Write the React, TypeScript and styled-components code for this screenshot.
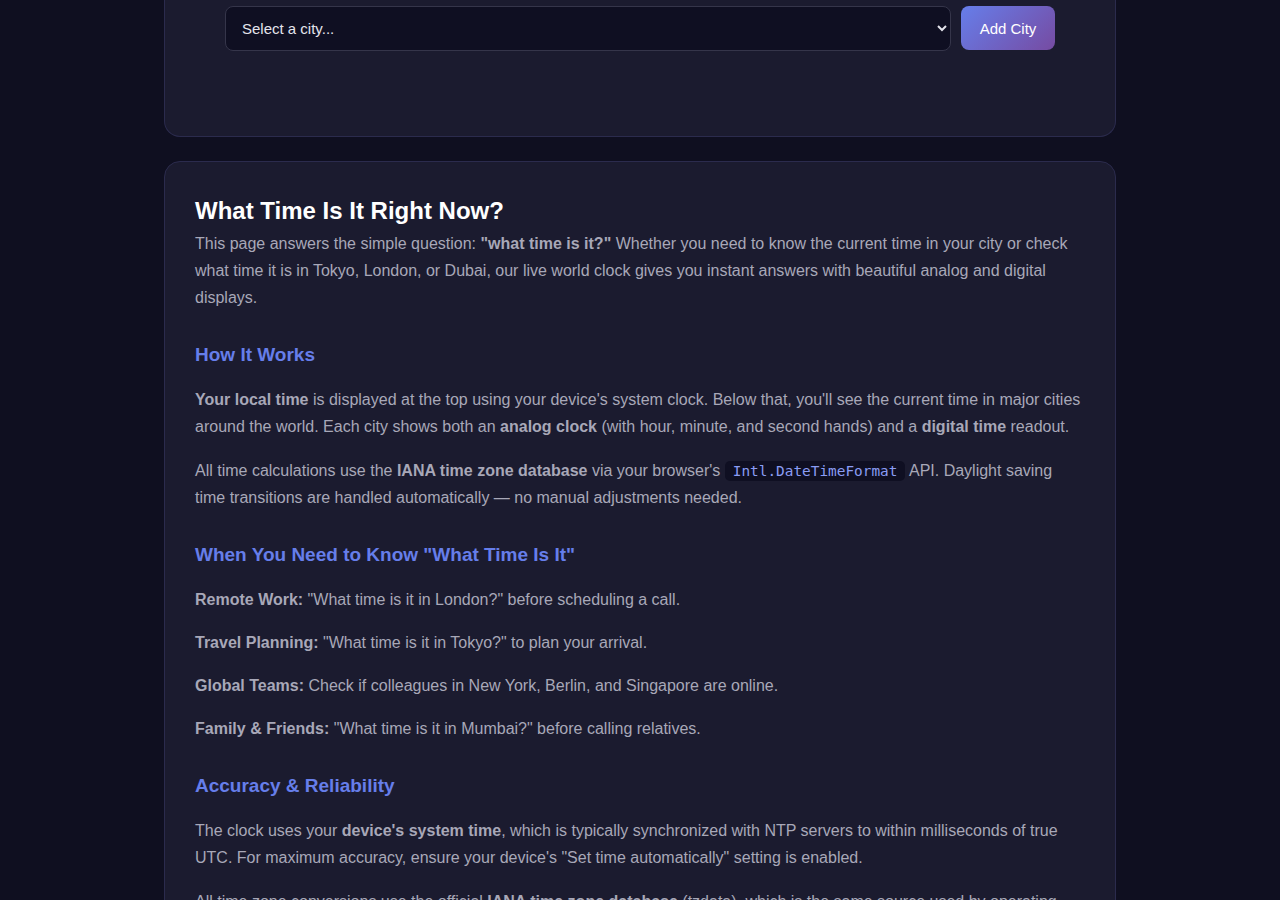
import styled, { createGlobalStyle } from 'styled-components';

const GlobalStyle = createGlobalStyle`
  * {
    box-sizing: border-box;
  }

  body {
    margin: 0;
    background: #0f0f20;
    font-family: "Liberation Sans", Arial, sans-serif;
    color: #a8a8b8;
  }
`;

const Page = styled.main`
  width: 952px;
  margin: 0 auto;
  padding-bottom: 40px;
`;

const Card = styled.section<{ $clipped?: boolean }>`
  background: #1b1b2f;
  border: 1px solid #2b2b4d;
  border-radius: ${(p) => (p.$clipped ? '0 0 16px 16px' : '16px')};
  border-top: ${(p) => (p.$clipped ? 'none' : '1px solid #2b2b4d')};
  padding: ${(p) => (p.$clipped ? '6px 30px 85px' : '30px')};
  margin-bottom: 24px;
`;

const AddRow = styled.div`
  display: flex;
  gap: 10px;
  width: 830px;
  margin: 0 auto;
`;

const CitySelect = styled.select`
  flex: 1;
  height: 45px;
  padding: 0 12px;
  background: #0f0f22;
  color: #e4e4ec;
  border: 1px solid #35354a;
  border-radius: 8px;
  font-family: "Liberation Sans", Arial, sans-serif;
  font-size: 15px;
`;

const AddButton = styled.button`
  width: 94px;
  height: 44px;
  border: none;
  border-radius: 8px;
  background: linear-gradient(135deg, #667eea 0%, #764ba2 100%);
  color: #fff;
  font-family: "Liberation Sans", Arial, sans-serif;
  font-size: 15px;
  cursor: pointer;
`;

const Title = styled.h2`
  margin: 5px 0 4px;
  font-size: 24px;
  line-height: 1.2;
  font-weight: 700;
  color: #ffffff;
`;

const Section = styled.h3`
  margin: 33px 0 19px;
  font-size: 19px;
  line-height: 1.2;
  font-weight: 700;
  color: #667eea;
`;

const Text = styled.p`
  margin: 0 0 16px;
  font-size: 16px;
  line-height: 1.7;
  color: #a8a8b8;

  strong {
    font-weight: 700;
  }
`;

const Code = styled.code`
  padding: 2px 8px;
  border-radius: 5px;
  background: #0f0f22;
  color: #8a9cf4;
  font-family: "DejaVu Sans Mono", "Liberation Mono", monospace;
  font-size: 14.4px;
`;

export default function App() {
  return (
    <>
      <GlobalStyle />
      <Page>
        <Card $clipped>
          <AddRow>
            <CitySelect defaultValue="">
              <option value="">Select a city...</option>
              <option>Tokyo</option>
              <option>London</option>
              <option>Dubai</option>
            </CitySelect>
            <AddButton>Add City</AddButton>
          </AddRow>
        </Card>

        <Card>
          <Title>What Time Is It Right Now?</Title>
          <Text>
            This page answers the simple question: <strong>"what time is it?"</strong> Whether you need
            to know the current time in your city or check what time it is in Tokyo, London, or Dubai,
            our live world clock gives you instant answers with beautiful analog and digital displays.
          </Text>

          <Section>How It Works</Section>
          <Text>
            <strong>Your local time</strong> is displayed at the top using your device's system clock.
            Below that, you'll see the current time in major cities around the world. Each city shows
            both an <strong>analog clock</strong> (with hour, minute, and second hands) and a{' '}
            <strong>digital time</strong> readout.
          </Text>
          <Text>
            All time calculations use the <strong>IANA time zone database</strong> via your browser's{' '}
            <Code>Intl.DateTimeFormat</Code> API. Daylight saving time transitions are handled
            automatically — no manual adjustments needed.
          </Text>

          <Section>When You Need to Know "What Time Is It"</Section>
          <Text>
            <strong>Remote Work:</strong> "What time is it in London?" before scheduling a call.
          </Text>
          <Text>
            <strong>Travel Planning:</strong> "What time is it in Tokyo?" to plan your arrival.
          </Text>
          <Text>
            <strong>Global Teams:</strong> Check if colleagues in New York, Berlin, and Singapore are
            online.
          </Text>
          <Text>
            <strong>Family &amp; Friends:</strong> "What time is it in Mumbai?" before calling relatives.
          </Text>

          <Section>Accuracy &amp; Reliability</Section>
          <Text>
            The clock uses your <strong>device's system time</strong>, which is typically synchronized
            with NTP servers to within milliseconds of true UTC. For maximum accuracy, ensure your
            device's "Set time automatically" setting is enabled.
          </Text>
          <Text>
            All time zone conversions use the official <strong>IANA time zone database</strong> (tzdata),
            which is the same source used by operating systems, programming languages, and major
            websites worldwide.
          </Text>
        </Card>
      </Page>
    </>
  );
}
